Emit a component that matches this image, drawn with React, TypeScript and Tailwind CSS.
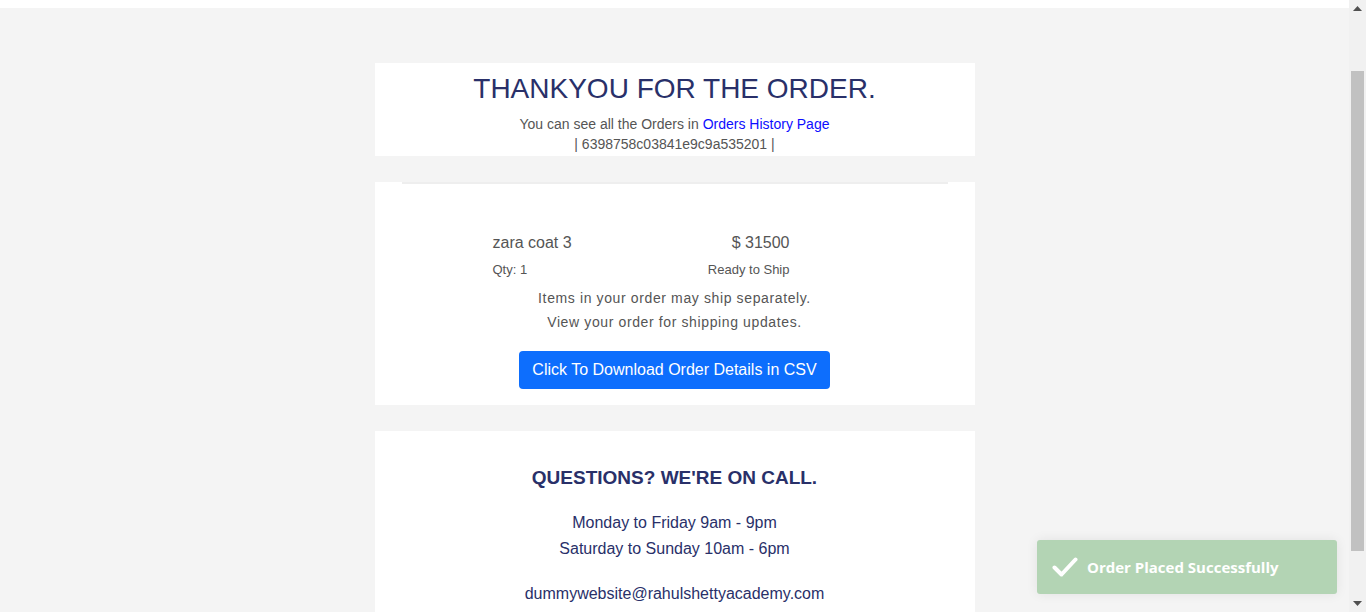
import React from "react";

export default function App() {
  return (
    <div className="relative flex h-[612px] w-full overflow-hidden" style={{ fontFamily: '"Liberation Sans", Arial, sans-serif' }}>
      <div className="flex flex-1 flex-col bg-[#f4f4f4]">
        <div className="h-[8px] shrink-0 bg-white" />
        <div className="mx-auto mt-[55px] flex w-[600px] shrink-0 flex-col gap-[26px]">
          {/* Card 1 */}
          <div className="flex h-[93px] shrink-0 flex-col items-center bg-white pt-[9px]">
            <h1 className="text-[28px] leading-[34px] text-[#293069]">THANKYOU FOR THE ORDER.</h1>
            <p className="mt-[8px] text-[14px] leading-[20px] text-[#555]">
              You can see all the Orders in <span className="text-[#0d0dff]">Orders History Page</span>
            </p>
            <p className="text-[14px] leading-[20px] text-[#555]">| 6398758c03841e9c9a535201 |</p>
          </div>

          {/* Card 2 */}
          <div className="flex h-[223px] shrink-0 flex-col bg-white">
            <div className="mx-[27px] h-[2px] shrink-0 bg-[#eeeeee]" />
            <div className="ml-[118px] mt-[47px] w-[297px]">
              <div className="flex justify-between text-[16px] leading-[24px] text-[#555]">
                <span>zara coat 3</span>
                <span>$ 31500</span>
              </div>
              <div className="mt-[7px] flex justify-between text-[13px] leading-[16px] text-[#555]">
                <span>Qty: 1</span>
                <span>Ready to Ship</span>
              </div>
            </div>
            <div className="mt-[8px] flex flex-col items-center text-[14px] leading-[24px] tracking-[0.62px] text-[#555]">
              <span>Items in your order may ship separately.</span>
              <span>View your order for shipping updates.</span>
            </div>
            <div className="mt-[17px] flex justify-center">
              <button className="h-[38px] w-[311px] rounded-[4px] bg-[#0d6efd] text-[16px] leading-[24px] text-white">
                Click To Download Order Details in CSV
              </button>
            </div>
          </div>

          {/* Card 3 */}
          <div className="flex h-[300px] shrink-0 flex-col items-center bg-white pt-[34px] text-[#293069]">
            <h2 className="text-[19px] font-bold leading-[26px]">QUESTIONS? WE'RE ON CALL.</h2>
            <p className="mt-[19px] text-[16px] leading-[26px]">Monday to Friday 9am - 9pm</p>
            <p className="text-[16px] leading-[26px]">Saturday to Sunday 10am - 6pm</p>
            <p className="mt-[19px] text-[16px] leading-[26px]">dummywebsite@rahulshettyacademy.com</p>
          </div>
        </div>
      </div>

      {/* Scrollbar */}
      <div className="flex w-[17px] flex-col items-center bg-[#f1f1f1]">
        <div className="flex h-[17px] w-full shrink-0 items-center justify-center">
          <svg width="9" height="5" viewBox="0 0 9 5"><path d="M0 5 L4.5 0 L9 5 Z" fill="#505050" /></svg>
        </div>
        <div className="mt-[54px] h-[480px] w-[13px] shrink-0 bg-[#c1c1c1]" />
        <div className="flex-1" />
        <div className="flex h-[17px] w-full shrink-0 items-center justify-center">
          <svg width="9" height="5" viewBox="0 0 9 5"><path d="M0 0 L9 0 L4.5 5 Z" fill="#505050" /></svg>
        </div>
      </div>

      {/* Toast */}
      <div
        className="absolute bottom-[18px] right-[29px] flex h-[54px] w-[300px] items-center rounded-[3px] bg-[#b3d4b4] pl-[15px] shadow-[0_0_12px_rgba(0,0,0,0.08)]"
        style={{ fontFamily: '"Open Sans", "Noto Sans", sans-serif' }}
      >
        <svg width="26" height="22" viewBox="0 0 26 22" className="mr-[9px]">
          <path d="M2.5 11.5 L9.5 18.5 L23.5 3.5" stroke="white" strokeWidth="4" fill="none" strokeLinecap="round" strokeLinejoin="round" />
        </svg>
        <span className="text-[15px] font-bold text-white">Order Placed Successfully</span>
      </div>
    </div>
  );
}
